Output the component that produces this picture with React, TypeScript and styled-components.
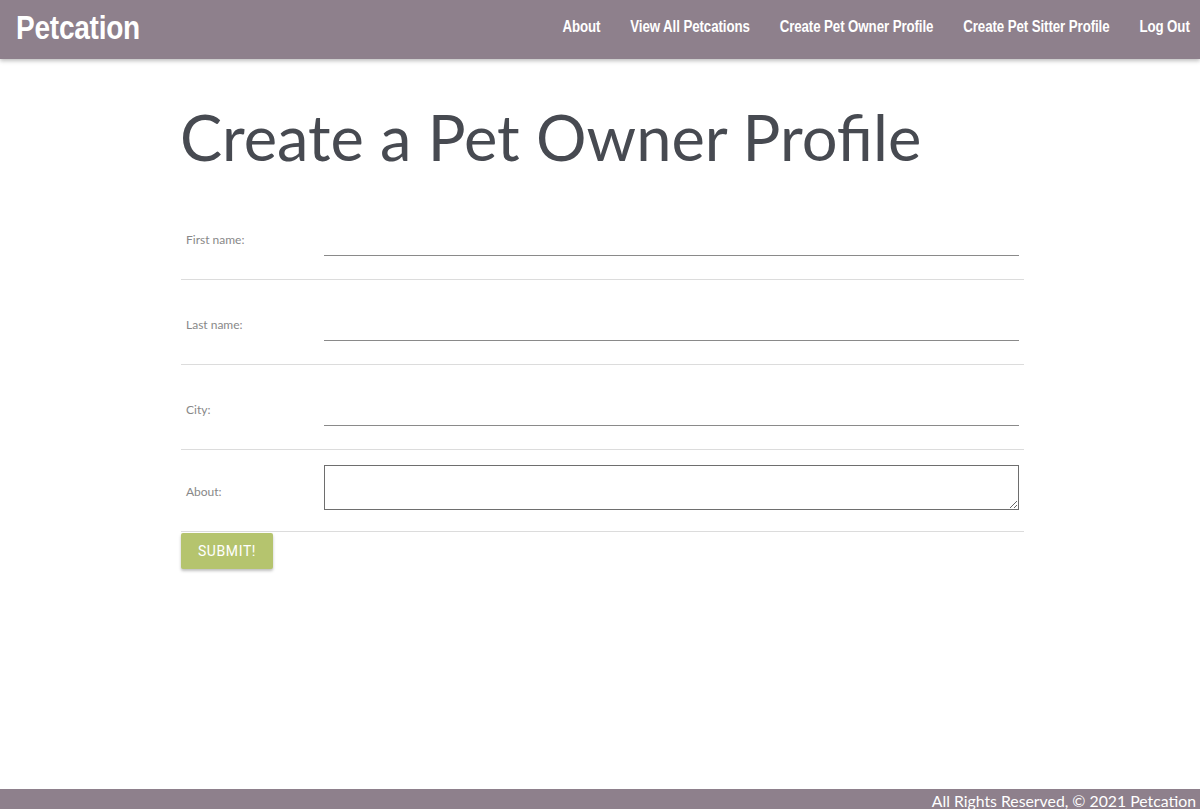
import React from 'react';
import styled, {createGlobalStyle} from 'styled-components';

const GlobalStyle = createGlobalStyle`
  html, body {
    margin: 0;
    padding: 0;
    background: #fff;
  }
  body {
    font-family: Lato, 'Open Sans', sans-serif;
  }
  #root {
    min-height: 809px;
    display: flex;
    flex-direction: column;
  }
`;

const navLinks = [
  'About',
  'View All Petcations',
  'Create Pet Owner Profile',
  'Create Pet Sitter Profile',
  'Log Out'
];

const fields = [
  {id: 'first', label: 'First name:'},
  {id: 'last', label: 'Last name:'},
  {id: 'city', label: 'City:'}
];

const App: React.FC = () => {
  return (
    <>
      <GlobalStyle />
      <StyledHeader>
        <StyledBrand>Petcation</StyledBrand>
        <StyledNav>
          {navLinks.map((link) => (
            <StyledNavLink key={link} href="#">
              {link}
            </StyledNavLink>
          ))}
        </StyledNav>
      </StyledHeader>
      <StyledMain>
        <StyledTitle>Create a Pet Owner Profile</StyledTitle>
        <StyledForm onSubmit={(e) => e.preventDefault()}>
          {fields.map((f) => (
            <StyledRow key={f.id}>
              <StyledLabel htmlFor={f.id}>{f.label}</StyledLabel>
              <StyledInput id={f.id} type="text" />
            </StyledRow>
          ))}
          <StyledRow short>
            <StyledLabel htmlFor="about" short>
              About:
            </StyledLabel>
            <StyledTextArea id="about" />
          </StyledRow>
          <StyledSubmit type="submit">Submit!</StyledSubmit>
        </StyledForm>
      </StyledMain>
      <StyledFooter>All Rights Reserved, © 2021 Petcation</StyledFooter>
    </>
  );
};

export default App;

// condensed display face is not installed, so the header text is squeezed
const StyledHeader = styled.header`
  height: 59px;
  background: #8e808c;
  box-shadow: 0 2px 4px rgb(0 0 0 / 25%);
  display: flex;
  align-items: center;
  justify-content: space-between;
  padding: 0 10px 0 16px;
  position: relative;
  z-index: 1;
`;
const StyledBrand = styled.div`
  color: #fff;
  font-family: 'Liberation Sans', sans-serif;
  font-weight: bold;
  font-size: 33px;
  letter-spacing: -0.3px;
  margin-top: -4px;
  transform: scaleX(0.85);
  transform-origin: left center;
`;
const StyledNav = styled.nav`
  display: flex;
  gap: 36px;
  margin-top: -6px;
  transform: scaleX(0.83);
  transform-origin: right center;
`;
const StyledNavLink = styled.a`
  color: #fff;
  text-decoration: none;
  font-family: 'Liberation Sans', sans-serif;
  font-weight: bold;
  font-size: 16px;
  letter-spacing: -0.1px;
`;
const StyledMain = styled.main`
  flex: 1;
  width: 843px;
  margin: 0 auto 0 181px;
`;
const StyledTitle = styled.h1`
  margin: 38px 0 0 -1px;
  font-family: Lato, sans-serif;
  font-weight: normal;
  font-size: 63.2px;
  line-height: 80px;
  color: #474a51;
`;
const StyledForm = styled.form`
  margin-top: 18px;
  display: flex;
  flex-direction: column;
`;
const StyledRow: any = styled.div<{short?: boolean}>`
  display: grid;
  grid-template-columns: 143px 695px;
  align-items: start;
  height: ${({short}: any) => (short ? '82px' : '85px')};
  box-sizing: border-box;
  border-bottom: 1px solid #dcdcdc;
`;
const StyledLabel: any = styled.label<{short?: boolean}>`
  font-family: Lato, sans-serif;
  font-size: 12px;
  line-height: 14px;
  color: #888;
  padding-left: 5px;
  margin-top: ${({short}: any) => (short ? '35px' : '38px')};
`;
const StyledInput = styled.input`
  box-sizing: border-box;
  margin-top: 30px;
  border: 0;
  border-bottom: 1px solid #8a8a8a;
  height: 31px;
  padding: 0;
  outline: none;
  font-family: Lato, sans-serif;
  font-size: 14px;
  background: transparent;
`;
const StyledTextArea = styled.textarea`
  box-sizing: border-box;
  margin-top: 15px;
  height: 45px;
  width: 695px;
  border: 1px solid #6e6e6e;
  padding: 2px;
  font-family: Lato, sans-serif;
  outline: none;
`;
const StyledSubmit = styled.button`
  align-self: flex-start;
  margin-top: 1px;
  width: 92px;
  height: 36px;
  border: 0;
  border-radius: 2px;
  background: #b5c46e;
  color: #fff;
  text-transform: uppercase;
  font-family: Roboto, 'Open Sans', sans-serif;
  font-size: 14px;
  letter-spacing: 0.6px;
  box-shadow: 0 2px 3px rgb(0 0 0 / 25%);
  cursor: pointer;
`;
const StyledFooter = styled.footer`
  height: 20px;
  background: #8e808c;
  color: #fff;
  font-family: Lato, sans-serif;
  font-size: 15.8px;
  line-height: 24px;
  text-align: right;
  padding-right: 4px;
  overflow: hidden;
`;
